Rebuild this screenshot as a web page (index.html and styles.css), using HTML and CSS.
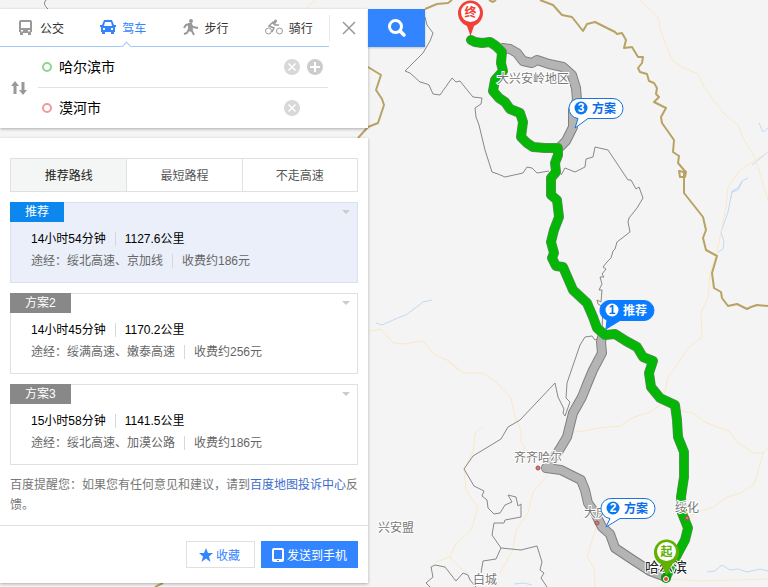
FILE: index.html
```html
<!DOCTYPE html>
<html lang="zh-CN">
<head>
    <meta charset="UTF-8">
    <meta name="viewport" content="width=device-width, initial-scale=1.0">
    <title>百度地图</title>
    <link rel="stylesheet" href="styles.css">
</head>
<body>
    <svg class="map" viewBox="0 0 768 587" preserveAspectRatio="xMinYMin slice">
        <!-- rivers -->
        <g class="river">
            <path d="M376 323L382 325L400 317L406 315L423 302L432 300"/>
            <path d="M742 182L738 190L732 192L728 212L721 232L724 242L723 249L718 252M731 198L732 191L738 188L742 181L748 178M759 123L763 132L768 128M752 165L768 152"/>
            <path d="M707 572L715 571L722 565L730 570L738 569L747 572L760 569L768 571M514 584L524 583L532 585"/>
        </g>
        <!-- roads -->
        <g class="road">
            <path d="M640 0L658 17L661 32L672 60L682 67L698 74L704 87L725 115L738 125L742 136L755 158L768 200"/>
            <path d="M768 152L740 170L728 187L726 207L717 252L710 273L708 297L701 313L702 337L688 348L677 365L668 377L665 392L660 405L650 412L632 418L620 426L600 428L570 433"/>
            <path d="M680 411L693 413L705 422L730 432L736 441L753 453L763 453L768 448M763 453L757 475L753 485L740 493L727 497L713 507L697 512L688 518"/>
            <path d="M597 525L592 540L587 557L594 568L595 587M666 579L700 581L768 579M664 580V587"/>
            <path d="M448 360L463 373L483 373L496 382L511 398L515 417L521 430L521 442L535 463"/>
            <path d="M483 426L475 433L473 452L464 469L466 490L478 508L471 530L455 545L450 557L436 562M450 557L460 568L468 573"/>
            <path d="M548 475L533 492L528 513L516 530L513 550L500 573"/>
            <path d="M370 331L381 329L393 343L403 344L423 341L435 355L447 360L458 370M305 9L315 0"/>
        </g>
        <!-- province lines -->
        <g class="province">
            <path d="M46 0Q42 4 48 9M425 17L427 25L433 33L430 41L423 53L405 71L410 73L420 82L427 84L429 85L433 94L440 95L452 78L456 82L460 81L468 91L473 97L482 98L481 104L475 108L476 117L479 125L485 150L492 172L498 174L505 177L523 173L527 167L532 168L537 173L549 171"/>
            <path d="M561 175L565 168L575 172L585 167L586 159L593 157L595 147L608 150L628 180L631 180L636 189L639 187L643 198L637 208L629 218L628 222L630 232L617 242L615 249L613 251L611 258L607 262L603 267L606 269L602 274L604 277L600 277L602 284L599 290L602 290L601 302L597 300L598 304L603 307L602 330"/>
            <path d="M600 337L595 340L592 336L585 337L580 345L567 383L566 398L570 402L565 416L563 413L564 409L558 397L555 383L520 420L508 427L501 439L473 456L464 469L474 486L484 491L482 496L487 500L488 508L494 514L500 513L505 505L512 502L508 495L516 497L518 506L521 504L521 517L505 520L504 523L494 523L492 535L501 548L496 559L483 561L481 573"/>
            <path d="M501 548L521 550L537 546L542 562L540 570L544 573L541 578L547 587M430 587L426 583L433 577L431 567L435 565L445 567L456 581L463 573L468 575L470 580L476 587"/>
        </g>
        <!-- country border -->
        <g class="border">
            <path d="M425 9L437 4L448 3L452 0M489 0L493 2L496 0M540 0L553 5L562 15L572 17L583 31L587 24L595 22L615 32L617 34L622 33L626 40L624 48L632 47L638 57L643 57L642 63L638 68L640 72L647 74L649 81L654 83L657 88L656 94L659 97L654 102L666 108L661 117L662 123L674 140L673 152L679 156L678 163L684 170L686 172L685 177L680 177L679 171L684 172L684 193L703 217L706 230L703 238L706 250L717 256L712 273L714 288L721 292L722 298L728 306L737 304L747 309L751 307L757 305L768 306"/>
            <path d="M368 67L381 75L376 90L382 99L384 105L378 123L368 127L358 138M163 583L155 587"/>
        </g>

        <!-- alternative routes -->
        <g class="route">
            <path class="line-edge" d="M503 48L510 49L517 53L523 61L532 63L537 60L549 64L563 67L572 75L576 88L577 100L573 110L573 127L570 133L566 141L560 147"/>
            <path class="line-edge" d="M603 333L601 342L602 353L593 370L588 382L582 397L573 413L567 437L558 452L546 468L561 470L571 475L581 480L585 490L588 503L595 513L602 527L610 534L615 548L633 560L650 571L666 577"/>
            <path class="line-grey" d="M503 48L510 49L517 53L523 61L532 63L537 60L549 64L563 67L572 75L576 88L577 100L573 110L573 127L570 133L566 141L560 147"/>
            <path class="line-grey" d="M603 333L601 342L602 353L593 370L588 382L582 397L573 413L567 437L558 452L546 468L561 470L571 475L581 480L585 490L588 503L595 513L602 527L610 534L615 548L633 560L650 571L666 577"/>
            <!-- recommended route -->
            <path class="line-edge" d="M471 40L475 42L482 43L490 42L496 46L502 52L501 63L503 71L495 80L493 91L499 98L505 102L510 109L520 113L523 122L521 137L527 143L533 147L545 148L558 148L558 155L555 163L556 172L551 178L551 195L557 200L559 217L554 230L551 242L554 253L552 258L556 266L563 267L573 290L587 303L593 317L597 328L605 335L615 334L626 341L637 347L643 357L653 361L649 373L651 387L660 398L675 405L677 420L678 437L684 452L684 477L681 497L682 513L688 528L685 540L678 553L666 577"/>
            <path class="line-green" d="M471 40L475 42L482 43L490 42L496 46L502 52L501 63L503 71L495 80L493 91L499 98L505 102L510 109L520 113L523 122L521 137L527 143L533 147L545 148L558 148L558 155L555 163L556 172L551 178L551 195L557 200L559 217L554 230L551 242L554 253L552 258L556 266L563 267L573 290L587 303L593 317L597 328L605 335L615 334L626 341L637 347L643 357L653 361L649 373L651 387L660 398L675 405L677 420L678 437L684 452L684 477L681 497L682 513L688 528L685 540L678 553L666 577"/>
        </g>

        <!-- cities -->
        <g class="city-dot">
            <circle cx="538" cy="468" r="2"/>
            <circle cx="597" cy="523" r="2"/>
            <circle cx="687" cy="518" r="2"/>
        </g>
        <g class="city">
            <text x="497" y="83">大兴安岭地区</text>
            <text x="514" y="462">齐齐哈尔</text>
            <text x="584" y="517">大庆</text>
            <text x="675" y="512">绥化</text>
            <text x="378" y="532">兴安盟</text>
            <text x="473" y="584">白城</text>
            <text class="capital" x="645" y="572">哈尔滨</text>
        </g>

        <!-- route callouts -->
        <g class="callout">
            <path d="M580 98.500H613A10 10 0 0 1 613 118.500H588L575 128L578 118.500A10 10 0 0 1 580 98.500Z"/>
            <circle cx="581" cy="108" r="6.500"/>
            <text class="callout-number" x="581" y="112">3</text>
            <text x="592" y="113">方案</text>
        </g>
        <g class="callout">
            <path d="M612 498.500H645A10 10 0 0 1 645 518.500H620L606 527L610 518.500A10 10 0 0 1 612 498.500Z"/>
            <circle cx="613" cy="508" r="6.500"/>
            <text class="callout-number" x="613" y="512">2</text>
            <text x="624" y="513">方案</text>
        </g>
        <g class="callout callout-main">
            <path d="M611 300.500H644A10 10 0 0 1 644 320.500H620L606 329L607 320A10 10 0 0 1 611 300.500Z"/>
            <circle cx="612" cy="310" r="6.500"/>
            <text class="callout-number" x="612" y="314">1</text>
            <text x="623" y="315">推荐</text>
        </g>

        <!-- pins -->
        <g class="pin pin-end">
            <path d="M470.500 36L467 26C462 24 458 19 458 13A12.500 12.500 0 0 1 483 13C483 19 479 24 474 26Z"/>
            <circle cx="470.500" cy="12.500" r="9.500"/>
            <text x="470.500" y="17">终</text>
        </g>
        <g class="pin pin-start">
            <circle class="pin-foot" cx="666" cy="578" r="5"/>
            <path d="M666.500 576L661 564C657 562 654 558 654 552A12.500 12.500 0 0 1 679 552C679 558 676 562 672 564Z"/>
            <circle cx="666.500" cy="551.500" r="9.500"/>
            <text x="666.500" y="556">起</text>
            <circle class="pin-dot" cx="666" cy="579" r="2.500"/>
        </g>
    </svg>

    <main class="sidebar">
        <form class="search">
            <div class="search-card">
                <div class="search-top">
                    <nav class="tabs">
                        <a class="tab" href="#bus">
                            <svg width="16" height="18" viewBox="0 0 16 18"><path fill="#999" fill-rule="evenodd" d="M3 1H12Q14 1 14 3V13H13V16H10V14H5V16H2V13H1V3Q1 1 3 1ZM3 3V9H12V3ZM3 11V12.500H5V11ZM10 11V12.500H12V11Z"/></svg>
                            公交
                        </a>
                        <a class="tab active" href="#drive">
                            <svg width="16" height="18" viewBox="0 0 16 18"><path fill="#3385ff" fill-rule="evenodd" d="M4 1H12L14 6H16V8H15V13H14V15H11V13H5V15H2V13H1V8H0V6H2ZM5 3L4 7H12L11 3ZM3 9V11H5V9ZM11 9V11H13V9Z"/></svg>
                            驾车
                        </a>
                        <a class="tab" href="#walk">
                            <svg width="16" height="18" viewBox="0 0 16 18"><circle cx="8" cy="2" r="2" fill="#999"/><path fill="none" stroke="#999" stroke-width="2" d="M1 9L3 6L7 5L10 8L15 9M7 5L6 11L9 12L11 16M6 10L4 14L1 15"/><path fill="#999" d="M5 4H9L10 11H5Z"/></svg>
                            步行
                        </a>
                        <a class="tab" href="#bike">
                            <svg width="18" height="18" viewBox="0 0 18 18"><g fill="none" stroke="#999"><circle cx="3.500" cy="12" r="3"/><circle cx="14.500" cy="12" r="3"/><path stroke-width="1.500" d="M11 4L8 3L4 7L9 9L7 13M8 4L10 6H14"/></g><circle cx="10.500" cy="2" r="1.500" fill="#999"/></svg>
                            骑行
                        </a>
                    </nav>
                    <button class="close" type="button" aria-label="关闭">
                        <svg width="14" height="14" viewBox="0 0 14 14"><path fill="none" stroke="#999" stroke-width="1.500" d="M1 1L13 13M13 1L1 13"/></svg>
                    </button>
                </div>
                <div class="points">
                    <button class="swap" type="button" aria-label="交换起终点">
                        <svg width="18" height="14" viewBox="0 0 18 14"><path fill="#999" d="M5 0L9 5H6.500V13H3.500V5H1ZM13 14L9 9H11.500V1H14.500V9H17Z"/></svg>
                    </button>
                    <div class="fields">
                        <div class="field">
                            <label class="ring ring-start" for="start" aria-label="起点"></label>
                            <input id="start" type="text" value="哈尔滨市">
                            <button class="round" type="button" aria-label="清除起点">
                                <svg width="16" height="16" viewBox="0 0 16 16"><circle cx="8" cy="8" r="8" fill="#d8d8d8"/><path stroke="#fff" stroke-width="1.500" d="M4.500 4.500L11.500 11.500M11.500 4.500L4.500 11.500"/></svg>
                            </button>
                            <button class="round" type="button" aria-label="添加途经点">
                                <svg width="16" height="16" viewBox="0 0 16 16"><circle cx="8" cy="8" r="8" fill="#ccc"/><path stroke="#fff" stroke-width="2" d="M3 8H13M8 3V13"/></svg>
                            </button>
                        </div>
                        <div class="field">
                            <label class="ring ring-end" for="end" aria-label="终点"></label>
                            <input id="end" type="text" value="漠河市">
                            <button class="round" type="button" aria-label="清除终点">
                                <svg width="16" height="16" viewBox="0 0 16 16"><circle cx="8" cy="8" r="8" fill="#d8d8d8"/><path stroke="#fff" stroke-width="1.500" d="M4.500 4.500L11.500 11.500M11.500 4.500L4.500 11.500"/></svg>
                            </button>
                            <span class="round"></span>
                        </div>
                    </div>
                </div>
            </div>
            <button class="search-btn" type="submit" aria-label="搜索">
                <svg width="20" height="20" viewBox="0 0 20 20"><circle cx="8.500" cy="8.500" r="6" fill="none" stroke="#fff" stroke-width="3"/><path stroke="#fff" stroke-width="3.500" stroke-linecap="round" d="M13 13L17 17"/></svg>
            </button>
        </form>

        <section class="panel">
            <div class="modes">
                <button class="mode selected" type="button">推荐路线</button>
                <button class="mode" type="button">最短路程</button>
                <button class="mode" type="button">不走高速</button>
            </div>

            <article class="plan plan-active">
                <div class="plan-head">
                    <span class="plan-tag">推荐</span>
                    <button class="plan-toggle" type="button" aria-label="展开"></button>
                </div>
                <div class="plan-body">
                    <p class="plan-time"><span>14小时54分钟</span><span>1127.6公里</span></p>
                    <p class="plan-via"><span>途经：绥北高速、京加线</span><span>收费约186元</span></p>
                </div>
            </article>

            <article class="plan">
                <div class="plan-head">
                    <span class="plan-tag">方案2</span>
                    <button class="plan-toggle" type="button" aria-label="展开"></button>
                </div>
                <div class="plan-body">
                    <p class="plan-time"><span>14小时45分钟</span><span>1170.2公里</span></p>
                    <p class="plan-via"><span>途经：绥满高速、嫩泰高速</span><span>收费约256元</span></p>
                </div>
            </article>

            <article class="plan">
                <div class="plan-head">
                    <span class="plan-tag">方案3</span>
                    <button class="plan-toggle" type="button" aria-label="展开"></button>
                </div>
                <div class="plan-body">
                    <p class="plan-time"><span>15小时58分钟</span><span>1141.5公里</span></p>
                    <p class="plan-via"><span>途经：绥北高速、加漠公路</span><span>收费约186元</span></p>
                </div>
            </article>

            <p class="notice">百度提醒您：如果您有任何意见和建议，请到<a href="#complaint">百度地图投诉中心</a>反馈。</p>

            <div class="actions">
                <button class="btn" type="button">
                    <svg width="14" height="14" viewBox="0 0 14 14"><path fill="#3385ff" d="M7 0L9 5H14L10 8.500L11.500 14L7 10.500L2.500 14L4 8.500L0 5H5Z"/></svg>
                    收藏
                </button>
                <button class="btn btn-primary" type="button">
                    <svg width="12" height="14" viewBox="0 0 12 14"><path fill="#fff" fill-rule="evenodd" d="M2 0H10Q12 0 12 2V12Q12 14 10 14H2Q0 14 0 12V2Q0 0 2 0ZM2 2V11H10V2ZM5 12V13H7V12Z"/></svg>
                    发送到手机
                </button>
            </div>
        </section>
    </main>
</body>
</html>
```

FILE: styles.css
```css
* {
    box-sizing: border-box;
}
body {
    margin: 0;
    min-height: 100vh;
    position: relative;
    overflow: hidden;
    background: #f4f4f4;
    font-family: "Liberation Sans", "Noto Sans CJK SC", sans-serif;
    font-size: 12px;
    color: #000;
}
button, input {
    font-family: inherit;
    font-size: 12px;
    border: none;
    background: none;
    padding: 0;
    margin: 0;
}
button {
    cursor: pointer;
    display: flex;
    align-items: center;
    justify-content: center;
}
p {
    margin: 0;
}

/* map */
.map {
    position: absolute;
    top: 0;
    left: 0;
    width: 100%;
    height: 100%;
}
.map path {
    stroke-linejoin: round;
}
.river path {
    fill: none;
    stroke: #c3d9f5;
    stroke-width: 1;
}
.road path {
    fill: none;
    stroke: #fbe8c8;
    stroke-width: 1;
}
.province path {
    fill: none;
    stroke: #888;
    stroke-width: 1;
}
.border path {
    fill: none;
    stroke: #b8a365;
    stroke-width: 2;
}
.route path {
    fill: none;
    stroke-linecap: round;
}
.route .line-edge {
    stroke: #808080;
    stroke-width: 10;
}
.route .line-grey {
    stroke: #b4b4b4;
    stroke-width: 8;
}
.route .line-green {
    stroke: #06b606;
    stroke-width: 9;
}
.city-dot circle {
    fill: #e57373;
    stroke: #a05050;
}
.city text {
    font-size: 12px;
    fill: #777;
    stroke: #fff;
    stroke-width: 2px;
    paint-order: stroke;
}
.city .capital {
    font-size: 14px;
    fill: #222;
}
.callout path {
    fill: #fff;
    stroke: #1a73e0;
}
.callout circle {
    fill: #0a78f0;
}
.callout text {
    font-size: 12px;
    font-weight: bold;
    fill: #0a6ee6;
}
.callout .callout-number {
    fill: #fff;
    text-anchor: middle;
}
.callout-main path {
    fill: #0a7cff;
    stroke: #0a7cff;
}
.callout-main circle {
    fill: #fff;
}
.callout-main text {
    fill: #fff;
}
.callout-main .callout-number {
    fill: #0a6ee6;
}
.pin circle {
    fill: #fff;
}
.pin text {
    font-size: 12px;
    font-weight: bold;
    text-anchor: middle;
}
.pin-end path, .pin-end text {
    fill: #f04038;
}
.pin-start path, .pin-start text {
    fill: #62b000;
}
.pin .pin-foot {
    fill: #079a07;
}
.pin .pin-dot {
    fill: #e04040;
    stroke: #fff;
}

/* sidebar */
.sidebar {
    position: relative;
    padding: 9px 0 4px;
    width: 425px;
}
.search {
    display: flex;
    align-items: flex-start;
    margin-bottom: 10px;
}
.search-card {
    width: 368px;
    background: #fff;
    box-shadow: 0 1px 3px rgba(0,0,0,0.3);
}
.search-btn {
    flex: 1;
    height: 38px;
    background: #3385ff;
    box-shadow: 0 1px 2px rgba(0,0,0,0.2);
}
.search-top {
    display: flex;
    height: 38px;
}
.tabs {
    flex: 1;
    display: grid;
    grid-template-columns: repeat(4, 1fr);
    border-bottom: 1px solid #a5c8f8;
}
.tab {
    display: flex;
    align-items: center;
    gap: 6px;
    padding-left: 18px;
    color: #333;
    text-decoration: none;
    position: relative;
}
.tab.active {
    color: #3385ff;
}
.tab.active::after {
    content: "";
    position: absolute;
    left: 41px;
    bottom: -4px;
    width: 6px;
    height: 6px;
    background: #fff;
    border: 1px solid #a5c8f8;
    border-right: none;
    border-bottom: none;
    transform: rotate(45deg);
}
.close {
    width: 39px;
    margin: 6px 0;
    border-left: 1px solid #e6e6e6;
}
.points {
    display: flex;
}
.swap {
    width: 38px;
}
.fields {
    width: 290px;
}
.field {
    display: flex;
    align-items: center;
    height: 40px;
    padding: 0 5px 0 4px;
    gap: 7px;
}
.field + .field {
    height: 41px;
    border-top: 1px solid #e2e2e2;
}
.ring {
    width: 10px;
    height: 10px;
    border: 2px solid #8fd48f;
    border-radius: 50%;
}
.ring-end {
    border-color: #f09a9a;
}
.field input {
    flex: 1;
    min-width: 0;
    height: 28px;
    padding-bottom: 2px;
    font-size: 14px;
    outline: none;
}
.round {
    width: 16px;
    height: 16px;
}

/* result panel */
.panel {
    width: 368px;
    padding-top: 20px;
    background: #fff;
    box-shadow: 0 1px 3px rgba(0,0,0,0.3);
}
.modes {
    display: grid;
    grid-template-columns: repeat(3, 1fr);
    margin: 0 10px 10px;
    border: 1px solid #e0e0e0;
}
.mode {
    height: 32px;
    padding-bottom: 2px;
    color: #555;
}
.mode + .mode {
    border-left: 1px solid #e0e0e0;
}
.mode.selected {
    background: #f4f6f5;
    color: #222;
}
.plan {
    margin: 0 10px 10px;
    border: 1px solid #e0e0e0;
}
.plan-head {
    display: flex;
    justify-content: space-between;
    align-items: center;
    margin: -1px 7px 0 -1px;
}
.plan-tag {
    padding: 0 15px;
    line-height: 20px;
    background: #888;
    color: #fff;
}
.plan-toggle {
    border: 4px solid transparent;
    border-top-color: #ccc;
    border-bottom: none;
}
.plan-body {
    padding: 6px 20px 10px;
    line-height: 22px;
}
.plan-body p {
    display: flex;
    align-items: center;
}
.plan-body span + span {
    border-left: 1px solid #d8d8d8;
    line-height: 14px;
}
.plan-time span + span {
    margin-left: 9px;
    padding-left: 9px;
}
.plan-via {
    color: #666;
}
.plan-via span + span {
    margin-left: 9px;
    padding-left: 9px;
}
.plan-active {
    background: #eaeffa;
    border-color: #dbe1ec;
}
.plan-active .plan-tag {
    background: #0c87ee;
}
.notice {
    padding: 0 8px 10px 10px;
    line-height: 20px;
    color: #777;
    word-break: break-all;
}
.notice a {
    color: #3d6dcc;
    text-decoration: none;
}
.actions {
    display: flex;
    justify-content: flex-end;
    gap: 6px;
    padding: 15px 10px;
    border-top: 1px solid #e0e0e0;
}
.btn {
    height: 27px;
    padding: 0 14px 0 12px;
    gap: 3px;
    border: 1px solid #e0e0e0;
    color: #3385ff;
}
.btn-primary {
    padding: 0 10px;
    background: #3385ff;
    border-color: #3385ff;
    color: #fff;
}
```
